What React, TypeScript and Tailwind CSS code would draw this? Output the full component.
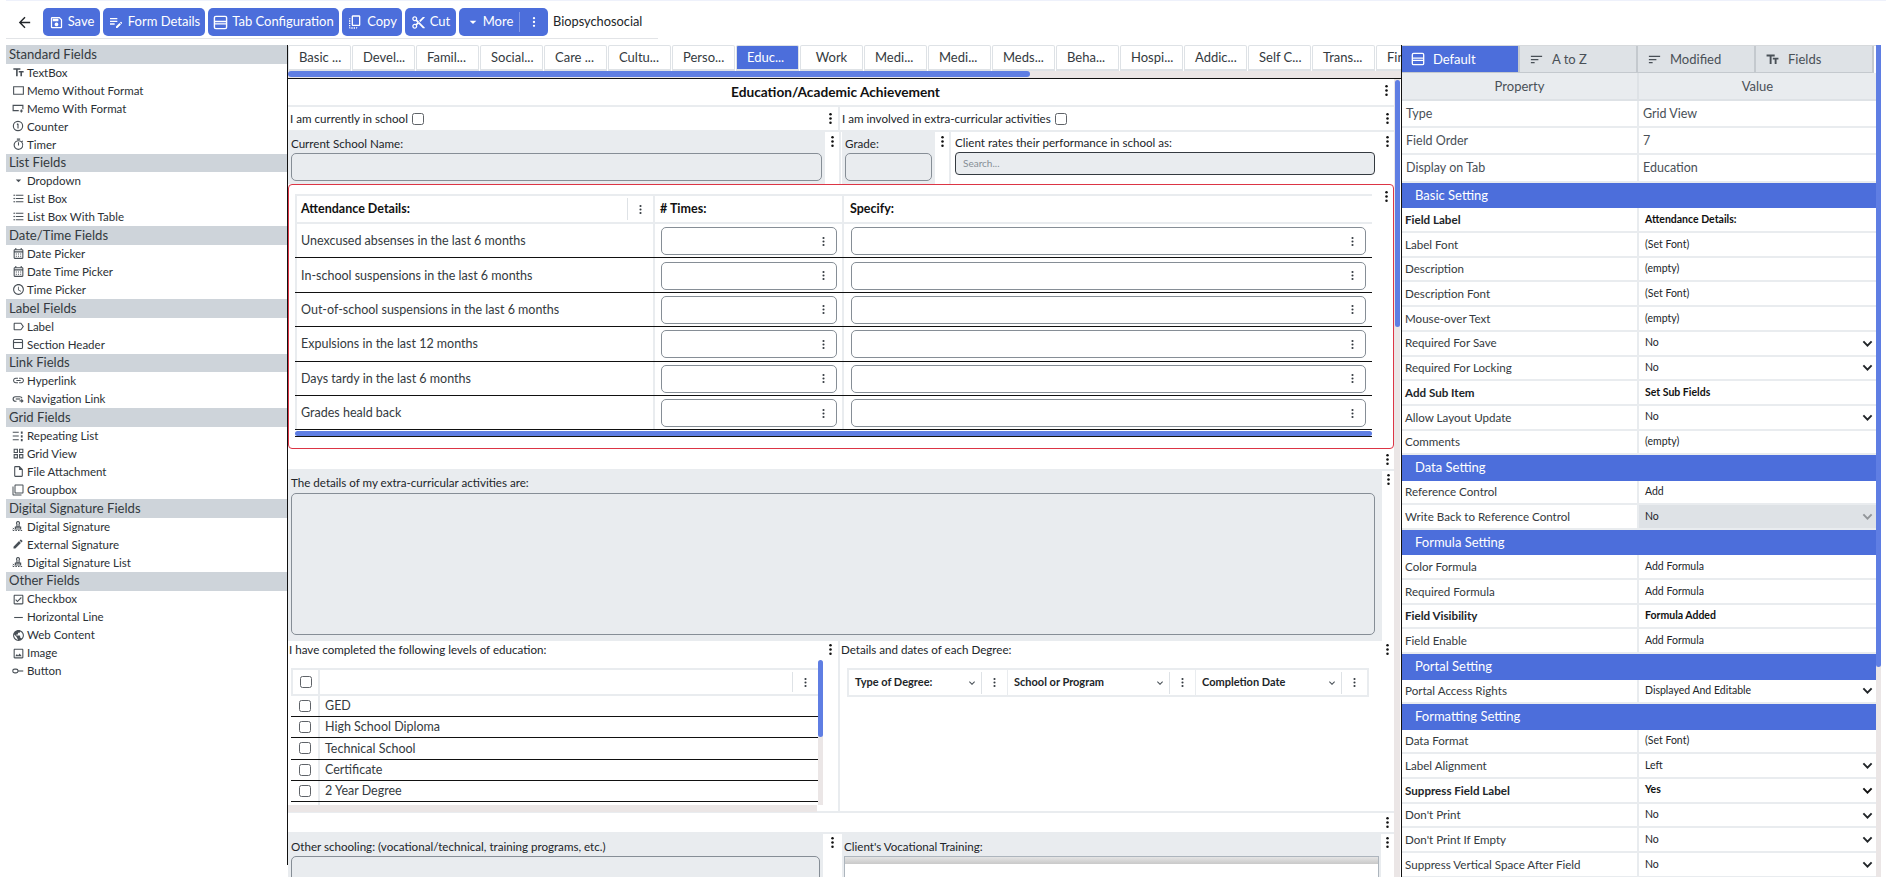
import React from "react";
import {
  MdArrowBack, MdOutlineSave, MdEditNote, MdContentCut, MdOutlineCopyAll, MdArrowDropDown, MdSort, MdTextFields,
  MdOutlineCheckBox, MdHorizontalRule, MdPublic, MdOutlineImage, MdOutlineTimer, MdOutlineAccessTime,
  MdFormatListBulleted, MdOutlineCalendarMonth, MdOutlineLabel, MdLink, MdOutlineGridView, MdOutlineInsertDriveFile,
  MdOutlineFilterNone, MdEdit, MdKeyboardArrowDown, MdOutlineRectangle,
} from "react-icons/md";

const S = ({ children, size = 12 }: { children: React.ReactNode; size?: number }) => (
  <svg width={size} height={size} viewBox="0 0 16 16" fill="none" stroke="currentColor" strokeWidth="1.5">{children}</svg>
);

const TabCfg = ({ size = 16 }: { size?: number }) => (
  <S size={size}><rect x="1.5" y="1.5" width="13" height="13" rx="1.5" /><path d="M1.5 7h13M1.5 9.5h13" /></S>
);
const Counter = () => <S><circle cx="8" cy="8" r="6.2" /><path d="M8 5v6.2M6.6 6l1.4-1" /></S>;
const Memo2 = () => <S><path d="M9 11.5H1.5v-7h13v5" /><path d="M12.5 10v4M10.5 12h4" /></S>;
const SecHead = () => <S><rect x="2" y="2" width="12" height="12" rx="1.5" /><path d="M2 6h12" /></S>;
const NavLink = () => <S><path d="M6 11H4.5a3 3 0 0 1 0-6h6a3 3 0 0 1 2.8 2" /><path d="M5 8h6" /><path d="M10 10.5h4.5M12.5 8.5l2 2-2 2" /></S>;
const Repeat = () => <S><path d="M1 3h8M1 8h8M1 13h8" /><path d="M13 2v3M13 7v3M13 12v3" strokeWidth="2.4" /></S>;
const Stamp = () => <S><path d="M8 2a2 2 0 0 1 1.4 3.4L9.5 9h-3l.1-3.6A2 2 0 0 1 8 2zM4.5 9.5h7v2.5h-7z" /><path d="M1 14h14" strokeDasharray="2 1.5" /><path d="M1 10.5l2 2M3 10.5l-2 2" strokeWidth="1" /></S>;
const Btn = () => <S><rect x="1" y="5.5" width="7" height="5" rx="2.5" /><path d="M8 8h7" /></S>;

const sections: { title: string; items: [string, React.ReactNode][] }[] = [
  { title: "Standard Fields", items: [
    ["TextBox", <MdTextFields size={13} />], ["Memo Without Format", <MdOutlineRectangle size={13} />], ["Memo With Format", <Memo2 />],
    ["Counter", <Counter />], ["Timer", <MdOutlineTimer size={13} />],
  ] },
  { title: "List Fields", items: [
    ["Dropdown", <MdArrowDropDown size={13} />], ["List Box", <MdFormatListBulleted size={13} />], ["List Box With Table", <MdFormatListBulleted size={13} />],
  ] },
  { title: "Date/Time Fields", items: [
    ["Date Picker", <MdOutlineCalendarMonth size={13} />], ["Date Time Picker", <MdOutlineCalendarMonth size={13} />], ["Time Picker", <MdOutlineAccessTime size={13} />],
  ] },
  { title: "Label Fields", items: [["Label", <MdOutlineLabel size={13} />], ["Section Header", <SecHead />]] },
  { title: "Link Fields", items: [["Hyperlink", <MdLink size={13} />], ["Navigation Link", <NavLink />]] },
  { title: "Grid Fields", items: [
    ["Repeating List", <Repeat />], ["Grid View", <MdOutlineGridView size={13} />], ["File Attachment", <MdOutlineInsertDriveFile size={13} />], ["Groupbox", <MdOutlineFilterNone size={12} />],
  ] },
  { title: "Digital Signature Fields", items: [["Digital Signature", <Stamp />], ["External Signature", <MdEdit size={12} />], ["Digital Signature List", <Stamp />]] },
  { title: "Other Fields", items: [
    ["Checkbox", <MdOutlineCheckBox size={13} />], ["Horizontal Line", <MdHorizontalRule size={13} />], ["Web Content", <MdPublic size={13} />], ["Image", <MdOutlineImage size={13} />], ["Button", <Btn />],
  ] },
];

const tabs = ["Basic ...", "Devel...", "Famil...", "Social...", "Care ...", "Cultu...", "Perso...", "Educ...", "Work", "Medi...", "Medi...", "Meds...", "Beha...", "Hospi...", "Addic...", "Self C...", "Trans...", "Fin"];

const Kebab = ({ size = 14, color = "text-[#111]" }: { size?: number; color?: string }) => (
  <svg width={size} height={size} viewBox="0 0 14 14" className={`shrink-0 ${color}`} fill="currentColor">
    <circle cx="7" cy="2.5" r="1.35" /><circle cx="7" cy="7" r="1.35" /><circle cx="7" cy="11.5" r="1.35" />
  </svg>
);
const Kb = () => <Kebab size={11} color="text-[#343a40]" />;

const Tool = ({ w, icon, label }: { w: string; icon: React.ReactNode; label: string }) => (
  <div className={`${w} h-[28px] rounded-[5px] bg-[#4c6edb] text-white flex items-center justify-center gap-[4px] text-[13px] shrink-0`}>
    {icon}<span>{label}</span>
  </div>
);

const Cb = ({ cls = "" }: { cls?: string }) => (
  <span className={`inline-block w-[12px] h-[12px] rounded-[2.5px] border border-[#5f6368] bg-white shrink-0 ${cls}`} />
);

const attendance = [
  "Unexcused absenses in the last 6 months",
  "In-school suspensions in the last 6 months",
  "Out-of-school suspensions in the last 6 months",
  "Expulsions in the last 12 months",
  "Days tardy in the last 6 months",
  "Grades heald back",
];

const Sel = () => (
  <svg width="11" height="11" viewBox="0 0 16 16" fill="none" stroke="currentColor" strokeWidth="2.8" className="shrink-0">
    <path d="M2 5l6 6 6-6" />
  </svg>
);

type Row = { h?: string; l?: string; v?: string; b?: boolean; sel?: boolean; off?: boolean };
const props: Row[] = [
  { h: "Basic Setting" },
  { l: "Field Label", v: "Attendance Details:", b: true },
  { l: "Label Font", v: "(Set Font)" },
  { l: "Description", v: "(empty)" },
  { l: "Description Font", v: "(Set Font)" },
  { l: "Mouse-over Text", v: "(empty)" },
  { l: "Required For Save", v: "No", sel: true },
  { l: "Required For Locking", v: "No", sel: true },
  { l: "Add Sub Item", v: "Set Sub Fields", b: true },
  { l: "Allow Layout Update", v: "No", sel: true },
  { l: "Comments", v: "(empty)" },
  { h: "Data Setting" },
  { l: "Reference Control", v: "Add" },
  { l: "Write Back to Reference Control", v: "No", sel: true, off: true },
  { h: "Formula Setting" },
  { l: "Color Formula", v: "Add Formula" },
  { l: "Required Formula", v: "Add Formula" },
  { l: "Field Visibility", v: "Formula Added", b: true },
  { l: "Field Enable", v: "Add Formula" },
  { h: "Portal Setting" },
  { l: "Portal Access Rights", v: "Displayed And Editable", sel: true },
  { h: "Formatting Setting" },
  { l: "Data Format", v: "(Set Font)" },
  { l: "Label Alignment", v: "Left", sel: true },
  { l: "Suppress Field Label", v: "Yes", b: true, sel: true },
  { l: "Don't Print", v: "No", sel: true },
  { l: "Don't Print If Empty", v: "No", sel: true },
  { l: "Suppress Vertical Space After Field", v: "No", sel: true },
];

const PropTab = ({ icon, label, on }: { icon: React.ReactNode; label: string; on?: boolean }) => (
  <div className={`w-[118px] h-[27px] flex items-center gap-[8px] pl-[9px] text-[13px] border-r-2 border-b border-[#c4c9ce] ${on ? "bg-[#4c6edb] text-white" : "bg-[#dee2e6] text-[#495057]"}`}>
    {icon}<span className="pt-[1px]">{label}</span>
  </div>
);

const PlainRow = ({ a, b, h = "h-[27px]" }: { a: string; b: string; h?: string }) => (
  <div className={`${h} flex text-[12.5px] text-[#495057] border-b-2 border-[#e9ecef]`}>
    <div className="w-[237px] border-r-2 border-[#e9ecef] pl-[4px] pt-[1px] flex items-center">{a}</div>
    <div className="flex-1 pl-[4px] pt-[1px] flex items-center">{b}</div>
  </div>
);

export default function App() {
  return (
    <div className="w-[1886px] h-[877px] overflow-hidden bg-white text-[#212529] text-[12px] flex flex-col" style={{ fontFamily: 'Lato, sans-serif' }}>
      {/* toolbar */}
      <div className="h-[1px] ml-[6px] w-[1880px] bg-[#eef1fb] shrink-0" />
      <div className="h-[38px] ml-[6px] w-[652px] border-b border-[#e2e4e7] flex items-start pt-[7px] shrink-0">
        <div className="w-[37px] h-[28px] flex items-center justify-center pl-[8px] pr-[8px]"><MdArrowBack size={17} className="text-[#212529]" /></div>
        <div className="flex gap-[3px]">
          <Tool w="w-[57px]" icon={<MdOutlineSave size={15} />} label="Save" />
          <Tool w="w-[102px]" icon={<MdEditNote size={16} />} label="Form Details" />
          <Tool w="w-[131px]" icon={<TabCfg size={15} />} label="Tab Configuration" />
          <Tool w="w-[60px]" icon={<MdOutlineCopyAll size={16} />} label="Copy" />
          <Tool w="w-[51px]" icon={<MdContentCut size={15} />} label="Cut" />
          <div className="w-[89px] h-[28px] rounded-[5px] bg-[#4c6edb] text-white flex items-center text-[13px]">
            <div className="w-[61px] flex items-center justify-center gap-[2px] border-r border-[#7f97e6] h-[20px]"><MdArrowDropDown size={16} /><span>More</span></div>
            <div className="flex-1 flex justify-center"><Kebab size={12} color="text-white" /></div>
          </div>
        </div>
        <div className="ml-[5px] h-[28px] flex items-center text-[12.8px] text-[#212529]">Biopsychosocial</div>
      </div>

      <div className="flex h-[838px] pt-[6px]">
        {/* sidebar */}
        <div className="w-[287px] pl-[6px] shrink-0">
          {sections.map((s) => (
            <div key={s.title}>
              <div className="h-[18.7px] bg-[#ced4da] pl-[3px] flex items-center text-[13.1px] text-[#343a40]">{s.title}</div>
              {s.items.map(([t, ic]) => (
                <div key={t} className="h-[18px] flex items-center text-[11.5px] text-[#2b3035]">
                  <span className="w-[21px] pl-[3px] -mt-[1px] flex justify-center text-[#495057] shrink-0">{ic}</span>
                  <span className="-mt-[1px]">{t}</span>
                </div>
              ))}
            </div>
          ))}
        </div>

        {/* centre */}
        <div className="w-[1114px] h-[820px] border-l border-[#111] shrink-0 flex flex-col">
          <div className="h-[26px] flex gap-[1px] overflow-hidden shrink-0">
            {tabs.map((t, i) => (
              <div key={i} className={`w-[63px] h-[26px] shrink-0 flex items-center rounded-t-[2px] border border-b-2 border-[#dee2e6] text-[13px] ${t === "Work" ? "justify-center" : "pl-[10px]"} ${i === 7 ? "bg-[#4c6edb] text-white" : "bg-white text-[#343a40]"}`}>{t}</div>
            ))}
          </div>
          <div className="h-[7px] bg-[#ebe6e6] shrink-0"><div className="h-[6px] w-[742px] rounded-full bg-[#5f7ee3]" /></div>
          <div className="h-[1px] bg-[#111] shrink-0" />

          <div className="flex flex-1 overflow-visible">
            <div className="w-[1106px] shrink-0 flex flex-col">
              {/* title */}
              <div className="h-[28px] shrink-0 flex items-center border-b-2 border-[#e9ecef]">
                <div className="flex-1 text-center font-bold text-[13.7px] text-[#111] pl-[3px]">Education/Academic Achievement</div>
                <div className="w-[14px] -mt-[4px]"><Kebab size={13} /></div>
              </div>
              {/* checkboxes */}
              <div className="h-[25px] shrink-0 flex border-b-2 border-[#e9ecef]">
                <div className="w-[552px] flex items-center gap-[4px] pl-[2px] text-[11.6px] border-r-2 border-[#e9ecef]">
                  <span>I am currently in school</span><Cb />
                  <span className="ml-auto mr-[1px]"><Kebab size={13} /></span>
                </div>
                <div className="flex-1 flex items-center gap-[4px] pl-[2px] text-[11.6px]">
                  <span>I am involved in extra-curricular activities</span><Cb />
                  <span className="ml-auto"><Kebab size={13} /></span>
                </div>
              </div>
              {/* school row */}
              <div className="h-[52px] shrink-0 flex">
                <div className="w-[537px] bg-[#e9ecef] px-[3px] shrink-0">
                  <div className="h-[20px] pt-[4px] text-[11.6px] leading-[16px]">Current School Name:</div>
                  <div className="mt-[1px] h-[28px] rounded-[5px] border border-[#868e96] bg-[#e9ecef]" />
                </div>
                <div className="w-[16px] shrink-0 pt-[3px] flex justify-center border-r-2 border-[#e9ecef]"><Kebab size={13} /></div>
                <div className="w-[93px] bg-[#e9ecef] px-[3px] ml-[1px] shrink-0">
                  <div className="h-[20px] pt-[4px] text-[11.6px] leading-[16px]">Grade:</div>
                  <div className="mt-[1px] h-[28px] rounded-[5px] border border-[#868e96] bg-[#e9ecef]" />
                </div>
                <div className="w-[16px] shrink-0 pt-[3px] flex justify-center border-r-2 border-[#e9ecef]"><Kebab size={13} /></div>
                <div className="flex-1 flex">
                  <div className="flex-1 pl-[4px] pr-[6px]">
                    <div className="h-[20px] pt-[3px] text-[11.6px] leading-[16px]">Client rates their performance in school as:</div>
                    <div className="h-[23px] rounded-[4px] border border-[#343a40] bg-[#e9ecef] pl-[7px] flex items-center text-[10px] text-[#868e96]">Search...</div>
                  </div>
                  <div className="pt-[3px]"><Kebab size={13} /></div>
                </div>
              </div>
              {/* attendance */}
              <div className="h-[265px] shrink-0 border border-[#dc3545] rounded-[4px] flex pl-[6px]">
                <div className="w-[1077px] shrink-0 pt-[9px]">
                  <div className="h-[30px] flex border-y-2 border-[#e9ecef] text-[12.5px] font-bold text-[#111]">
                    <div className="w-[358px] flex items-center pl-[4px] border-l-2 border-[#e9ecef] shrink-0">
                      <span className="flex-1 pt-[1px]">Attendance Details:</span>
                      <span className="h-[22px] border-l border-[#dee2e6] w-[26px] flex items-center justify-center"><Kb /></span>
                    </div>
                    <div className="w-[191px] border-x-2 border-[#e9ecef] flex items-center pl-[5px] shrink-0">
                      <span className="pt-[1px]"># Times:</span>
                    </div>
                    <div className="flex-1 flex items-center pl-[6px]"><span className="pt-[1px]">Specify:</span></div>
                  </div>
                  {attendance.map((a) => (
                    <div key={a} className="h-[34.4px] flex border-b border-[#111] text-[12.5px] text-[#343a40]">
                      <div className="w-[358px] flex items-center pl-[4px] border-l-2 border-[#e9ecef] shrink-0"><span className="pt-[2px]">{a}</span></div>
                      <div className="w-[191px] border-x-2 border-[#e9ecef] flex items-center pl-[6px] pr-[5px] shrink-0">
                        <div className="w-full h-[28px] mt-[1px] rounded-[5px] border border-[#868e96] flex items-center justify-end pr-[7px]"><Kb /></div>
                      </div>
                      <div className="flex-1 flex items-center pl-[7px] pr-[6px]">
                        <div className="w-full h-[28px] mt-[1px] rounded-[5px] border border-[#868e96] flex items-center justify-end pr-[7px]"><Kb /></div>
                      </div>
                    </div>
                  ))}
                  <div className="h-[6px] pt-[1px]"><div className="h-[5px] rounded-full bg-[#5f7ee3]" /></div>
                  <div className="h-[1px] bg-[#111]" />
                </div>
                <div className="flex-1 pt-[5px] flex justify-end"><Kebab size={13} /></div>
              </div>
              {/* blank */}
              <div className="h-[22px] shrink-0 flex items-center justify-end border-b-2 border-[#e9ecef]"><Kebab size={13} /></div>
              {/* details */}
              <div className="h-[170px] shrink-0 flex">
                <div className="w-[1094px] bg-[#e9ecef] pl-[3px] pr-[7px] shrink-0">
                  <div className="h-[22px] pt-[4px] text-[11.6px] leading-[16px]">The details of my extra-curricular activities are:</div>
                  <div className="h-[142px] rounded-[5px] border border-[#868e96] bg-[#e9ecef]" />
                </div>
                <div className="flex-1 pt-[2px] flex justify-end"><Kebab size={13} /></div>
              </div>
              {/* levels */}
              <div className="h-[172px] shrink-0 flex border-b-2 border-[#e9ecef]">
                <div className="w-[535px] shrink-0 flex flex-col">
                  <div className="h-[27px] shrink-0 pl-[1px] pt-[1px] text-[11.6px] leading-[16px]">I have completed the following levels of education:</div>
                  <div className="flex h-[137px] shrink-0">
                    <div className="w-[530px] pl-[3px] overflow-hidden shrink-0">
                      <div className="h-[28px] flex border-y-2 border-[#e9ecef]">
                        <div className="w-[29px] border-x-2 border-[#e9ecef] flex items-center justify-center shrink-0"><Cb /></div>
                        <div className="flex-1" />
                        <div className="w-[26px] border-l border-[#dee2e6] my-[2px] flex items-center justify-center"><Kb /></div>
                      </div>
                      {["GED", "High School Diploma", "Technical School", "Certificate", "2 Year Degree", ""].map((t, i) => (
                        <div key={i} className={`h-[21.2px] flex ${i < 5 ? "border-b border-[#111]" : ""} text-[12.5px] text-[#343a40]`}>
                          <div className="w-[29px] border-r-2 border-[#e9ecef] flex items-center justify-center shrink-0">{t && <Cb />}</div>
                          <div className="flex-1 pl-[5px] pt-[1px] flex items-center">{t}</div>
                        </div>
                      ))}
                    </div>
                    <div className="w-[5px] bg-[#ebe6e6] shrink-0"><div className="h-[77px] rounded-full bg-[#5f7ee3] -mt-[8px]" /></div>
                  </div>
                  <div className="h-[7px] w-[529px] bg-[#ebe6e6] shrink-0" />
                </div>
                <div className="w-[17px] shrink-0 pt-[2px] flex justify-center border-r-2 border-[#e9ecef]"><Kebab size={13} /></div>
                <div className="flex-1 flex pl-[1px]">
                  <div className="flex-1">
                    <div className="h-[27px] pt-[1px] text-[11.6px] leading-[16px]">Details and dates of each Degree:</div>
                    <div className="ml-[6px] w-[522px] h-[29px] flex border-2 border-[#e9ecef] text-[11px] font-bold text-[#212529]">
                      {[["Type of Degree:", "w-[159px]"], ["School or Program", "w-[188px]"], ["Completion Date", "flex-1"]].map(([t, w], i) => (
                        <div key={t} className={`${w} flex items-center pl-[6px] ${i < 2 ? "border-r border-[#e9ecef]" : ""}`}>
                          <span className="flex-1">{t}</span>
                          <MdKeyboardArrowDown size={12} className="text-[#495057] mr-[3px]" />
                          <span className="w-[26px] h-[22px] border-l border-[#dee2e6] flex items-center justify-center"><Kb /></span>
                        </div>
                      ))}
                    </div>
                  </div>
                  <div className="pt-[2px]"><Kebab size={13} /></div>
                </div>
              </div>
              {/* blank 2 */}
              <div className="h-[21px] shrink-0 flex items-center justify-end border-b-2 border-[#e9ecef]"><Kebab size={13} /></div>
              {/* schooling */}
              <div className="h-[44px] shrink-0 flex">
                <div className="w-[535px] bg-[#e9ecef] px-[3px] shrink-0">
                  <div className="h-[22px] pt-[5px] text-[11.6px] leading-[16px]">Other schooling: (vocational/technical, training programs, etc.)</div>
                  <div className="h-[30px] rounded-t-[5px] border border-[#868e96] bg-[#e9ecef]" />
                </div>
                <div className="w-[19px] shrink-0 pt-[2px] flex justify-center"><Kebab size={13} /></div>
                <div className="w-[539px] bg-[#e9ecef] px-[2px] shrink-0">
                  <div className="h-[22px] pt-[5px] text-[11.6px] leading-[16px]">Client's Vocational Training:</div>
                  <div className="h-[30px] border border-[#adb5bd] bg-white"><div className="h-[7px] bg-gradient-to-b from-[#e4e4e4] to-[#c9c9c9]" /></div>
                </div>
                <div className="flex-1 pt-[2px] flex justify-end"><Kebab size={13} /></div>
              </div>
            </div>
            <div className="w-[6px] h-[850px] bg-[#ebe6e6] shrink-0 pl-[1px]"><div className="w-[5px] h-[247px] mt-[1px] rounded-full bg-[#5f7ee3]" /></div>
          </div>
        </div>

        {/* properties */}
        <div className="w-[480px] h-[840px] border-l border-[#111] shrink-0 flex">
          <div className="w-[474px] shrink-0">
            <div className="flex border-t border-[#d6d9dc]">
              <PropTab on label="Default" icon={<TabCfg size={14} />} />
              <PropTab label="A to Z" icon={<MdSort size={15} />} />
              <PropTab label="Modified" icon={<MdSort size={15} />} />
              <PropTab label="Fields" icon={<MdTextFields size={15} />} />
            </div>
            <div className="h-[28px] flex bg-[#e9ecef] text-[13px] text-[#495057] border-b-2 border-[#dee2e6]">
              <div className="w-[237px] flex items-center justify-center pt-[1px] border-r-2 border-[#dee2e6]">Property</div>
              <div className="flex-1 flex items-center justify-center pt-[1px]">Value</div>
            </div>
            <PlainRow a="Type" b="Grid View" />
            <PlainRow a="Field Order" b="7" />
            <PlainRow a="Display on Tab" b="Education" h="h-[28px]" />
            {props.map((r, i) =>
              r.h ? (
                <div key={i} className="h-[25.4px] bg-[#4c6edb] text-white text-[13px] pl-[13px] flex items-center">{r.h}</div>
              ) : (
                <div key={i} className="h-[24.7px] flex border-b-2 border-[#e9ecef]">
                  <div className={`w-[237px] pl-[3px] flex items-center text-[11.6px] text-[#343a40] border-r-2 border-[#e9ecef] shrink-0 ${r.b ? "font-bold text-[#212529]" : ""}`}>{r.l}</div>
                  <div className={`flex-1 pl-[6px] pr-[3px] flex items-center justify-between text-[10.5px] ${r.b ? "font-bold text-[#111]" : "text-[#212529]"} ${r.off ? "bg-[#dee2e6] text-[#868e96]" : ""}`}>
                    <span>{r.v}</span>{r.sel && <span className={r.off ? "opacity-40" : ""}><Sel /></span>}
                  </div>
                </div>
              )
            )}
          </div>
          <div className="w-[5px] h-[840px] bg-[#ebe6e6] shrink-0"><div className="h-[622px] rounded-b-full bg-[#5f7ee3]" /></div>
        </div>
      </div>
    </div>
  );
}
